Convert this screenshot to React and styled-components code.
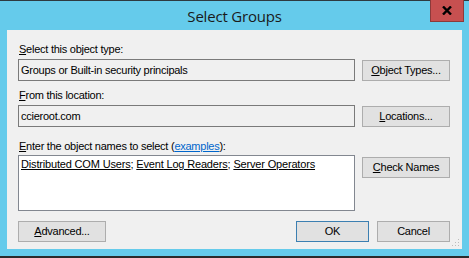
import React from 'react';
import styled, { createGlobalStyle } from 'styled-components';

const GlobalStyle = createGlobalStyle`
  html, body {
    margin: 0;
    padding: 0;
    background: #65cbeb;
  }
`;

const Window = styled.div`
  width: 469px;
  height: 258px;
  box-sizing: border-box;
  background: #65cbeb;
  border-top: 1px solid #2e3a40;
  border-bottom: 2px solid #2b2b2b;
  display: flex;
  flex-direction: column;
  font-family: "Liberation Sans", Arial, sans-serif;
  font-size: 11px;
  color: #000;
`;

const TitleBar = styled.div`
  height: 29px;
  display: grid;
  grid-template-columns: 1fr auto 1fr;
  align-items: start;
`;

const Title = styled.div`
  grid-column: 2;
  font-family: "Open Sans", "Noto Sans", sans-serif;
  font-size: 15px;
  line-height: 20px;
  margin-top: 5px;
  color: #1a1a1a;
  letter-spacing: -0.2px;
`;

const CloseButton = styled.div`
  grid-column: 3;
  justify-self: end;
  margin-right: 5px;
  margin-top: -1px;
  width: 34px;
  height: 22px;
  box-sizing: border-box;
  background: #c75050;
  border: 1px solid #8c3a3a;
  border-top: none;
  display: flex;
  align-items: center;
  justify-content: center;
`;

const Client = styled.div`
  margin: 0 7px;
  height: 219px;
  background: #f0f0f0;
  box-sizing: border-box;
  padding: 0 12px 0 11px;
  position: relative;
`;

const Row = styled.div`
  display: grid;
  grid-template-columns: 337px 88px;
  column-gap: 7px;
  align-items: ${p => p.align || 'center'};
`;

const Label = styled.div`
  height: 12px;
  line-height: 12px;
  padding-left: 1px;
  margin-top: ${p => p.top}px;
  margin-bottom: ${p => p.bottom}px;
  white-space: nowrap;
  letter-spacing: -0.25px;
`;

const Key = styled.span`
  text-decoration: underline;
`;

const Link = styled.span`
  color: #0066cc;
  text-decoration: underline;
`;

const TextBox = styled.div`
  height: ${p => p.h}px;
  box-sizing: border-box;
  border: 1px solid ${p => (p.white ? '#828790' : '#7a7a7a')};
  background: ${p => (p.white ? '#ffffff' : '#f0f0f0')};
  padding: ${p => (p.white ? '2px 2px' : '4px 2px')};
  line-height: 13px;
  white-space: nowrap;
  overflow: hidden;
  letter-spacing: ${p => (p.white ? '-0.17px' : '-0.25px')};
`;

const Name = styled.span`
  text-decoration: underline;
`;

const Button = styled.div`
  width: ${p => p.w || 88}px;
  height: 21px;
  box-sizing: border-box;
  background: #e1e1e1;
  border: 1px solid ${p => (p.primary ? '#3c7fb1' : '#adadad')};
  display: flex;
  align-items: center;
  justify-content: center;
  line-height: 13px;
  letter-spacing: -0.25px;
  align-self: ${p => p.self || 'center'};
  margin-top: ${p => p.top || 0}px;
`;

const Footer = styled.div`
  margin-top: 10px;
  display: flex;
  align-items: center;
`;

const Spacer = styled.div`
  flex: 1;
`;

const FooterButtons = styled.div`
  display: flex;
  gap: 8px;
`;

const Grip = styled.svg`
  position: absolute;
  right: 2px;
  bottom: 2px;
`;

export default function App() {
  return (
    <>
      <GlobalStyle />
      <Window>
        <TitleBar>
          <Title>Select Groups</Title>
          <CloseButton>
            <svg width="10" height="9" viewBox="0 0 10 9">
              <path d="M1 0.5 L9 8.5 M9 0.5 L1 8.5" stroke="#000" strokeWidth="2.4" />
            </svg>
          </CloseButton>
        </TitleBar>
        <Client>
          <Label top={13} bottom={4}>
            <Key>S</Key>elect this object type:
          </Label>
          <Row>
            <TextBox h={22}>Groups or Built-in security principals</TextBox>
            <Button>
              <span><Key>O</Key>bject Types...</span>
            </Button>
          </Row>
          <Label top={8} bottom={4}>
            <Key>F</Key>rom this location:
          </Label>
          <Row>
            <TextBox h={22}>ccieroot.com</TextBox>
            <Button>
              <span><Key>L</Key>ocations...</span>
            </Button>
          </Row>
          <Label top={13} bottom={3}>
            <Key>E</Key>nter the object names to select (<Link>examples</Link>):
          </Label>
          <Row align="start">
            <TextBox h={56} white>
              <Name>Distributed COM Users</Name>; <Name>Event Log Readers</Name>;{' '}
              <Name>Server Operators</Name>
            </TextBox>
            <Button self="start" top={2}>
              <span><Key>C</Key>heck Names</span>
            </Button>
          </Row>
          <Footer>
            <Button>
              <span><Key>A</Key>dvanced...</span>
            </Button>
            <Spacer />
            <FooterButtons>
              <Button primary w={73}>OK</Button>
              <Button w={73}>Cancel</Button>
            </FooterButtons>
          </Footer>
          <Grip width="8" height="8" viewBox="0 0 8 8">
            <rect x="6" y="0" width="1" height="1" fill="#bcbcbc" />
            <rect x="3" y="3" width="1" height="1" fill="#bcbcbc" />
            <rect x="6" y="3" width="1" height="1" fill="#bcbcbc" />
            <rect x="0" y="6" width="1" height="1" fill="#bcbcbc" />
            <rect x="3" y="6" width="1" height="1" fill="#bcbcbc" />
            <rect x="6" y="6" width="1" height="1" fill="#bcbcbc" />
          </Grip>
        </Client>
      </Window>
    </>
  );
}
